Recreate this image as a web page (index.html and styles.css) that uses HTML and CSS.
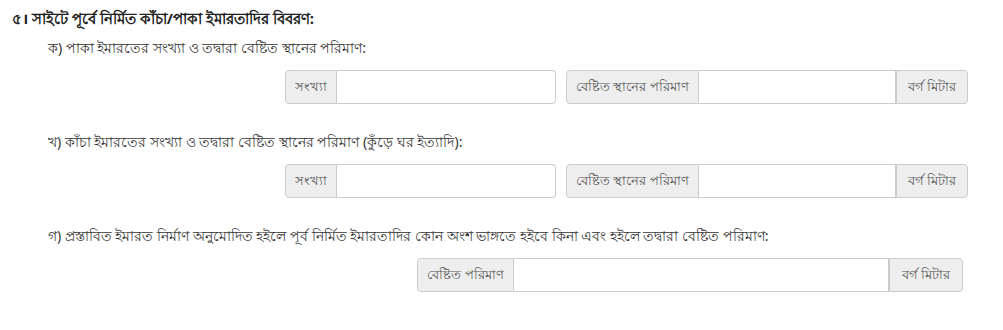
FILE: index.html
```html
<!DOCTYPE html>
<html lang="bn">
<head>
<meta charset="utf-8">
<title>সাইটে পূর্বে নির্মিত কাঁচা/পাকা ইমারতাদির বিবরণ</title>
<link rel="stylesheet" href="styles.css">
</head>
<body>
<div class="section">
  <div class="section-title">৫। সাইটে পূর্বে নির্মিত কাঁচা/পাকা ইমারতাদির বিবরণ:</div>

  <div class="item">
    <div class="item-label">ক) পাকা ইমারতের সংখ্যা ও তদ্বারা বেষ্টিত স্থানের পরিমাণ:</div>
    <div class="field-row row-a">
      <div class="input-group group-count">
        <span class="addon addon-count">সংখ্যা</span>
        <input class="control" type="text">
      </div>
      <div class="input-group group-area">
        <span class="addon addon-area">বেষ্টিত স্থানের পরিমাণ</span>
        <input class="control" type="text">
        <span class="addon addon-unit">বর্গ মিটার</span>
      </div>
    </div>
  </div>

  <div class="item">
    <div class="item-label">খ) কাঁচা ইমারতের সংখ্যা ও তদ্বারা বেষ্টিত স্থানের পরিমাণ (কুঁড়ে ঘর ইত্যাদি):</div>
    <div class="field-row row-a">
      <div class="input-group group-count">
        <span class="addon addon-count">সংখ্যা</span>
        <input class="control" type="text">
      </div>
      <div class="input-group group-area">
        <span class="addon addon-area">বেষ্টিত স্থানের পরিমাণ</span>
        <input class="control" type="text">
        <span class="addon addon-unit">বর্গ মিটার</span>
      </div>
    </div>
  </div>

  <div class="item item-last">
    <div class="item-label">গ) প্রস্তাবিত ইমারত নির্মাণ অনুমোদিত হইলে পূর্ব নির্মিত ইমারতাদির কোন অংশ ভাঙ্গতে হইবে কিনা এবং হইলে তদ্বারা বেষ্টিত পরিমাণ:</div>
    <div class="field-row row-c">
      <div class="input-group group-wide">
        <span class="addon addon-area2">বেষ্টিত পরিমাণ</span>
        <input class="control" type="text">
        <span class="addon addon-unit2">বর্গ মিটার</span>
      </div>
    </div>
  </div>
</div>
</body>
</html>
```

FILE: styles.css
```css
html, body {
  margin: 0;
  padding: 0;
  background: #fff;
}

body {
  font-family: "Noto Sans", "DejaVu Sans", sans-serif;
  font-size: 14px;
  color: #333;
}

.section {
  padding-top: 8px;
}

.section-title {
  padding-left: 12px;
  line-height: 20px;
  font-size: 15px;
  font-weight: bold;
  color: #222;
}

.item {
  margin-top: 10px;
}

.item + .item {
  margin-top: 28px;
}

.item-label {
  padding-left: 48px;
  line-height: 20px;
}

.field-row {
  display: flex;
  gap: 10px;
  margin-top: 12px;
}

.row-a {
  padding-left: 285px;
}

.row-c {
  padding-left: 417px;
}

.input-group {
  display: flex;
  height: 34px;
  box-sizing: border-box;
}

.group-count {
  width: 271px;
}

.group-area {
  width: 402px;
}

.group-wide {
  width: 546px;
}

.addon {
  box-sizing: border-box;
  display: flex;
  align-items: center;
  justify-content: center;
  flex: none;
  height: 34px;
  background: #eee;
  border: 1px solid #ccc;
  color: #555;
  font-size: 13px;
  white-space: nowrap;
}

.input-group > .addon:first-child {
  border-radius: 4px 0 0 4px;
}

.input-group > .addon:last-child {
  border-radius: 0 4px 4px 0;
}

.addon-count { width: 52px; }
.addon-area { width: 133px; }
.addon-unit { width: 72px; }
.addon-area2 { width: 97px; }
.addon-unit2 { width: 74px; }

.control {
  flex: 1;
  min-width: 0;
  height: 34px;
  box-sizing: border-box;
  margin: 0;
  padding: 6px 12px;
  border: 1px solid #ccc;
  border-left: 0;
  background: #fff;
  font: inherit;
  outline: none;
}

.input-group > .control:last-child {
  border-radius: 0 4px 4px 0;
}

.addon + .control + .addon {
  border-left: 1px solid #ccc;
}
```
